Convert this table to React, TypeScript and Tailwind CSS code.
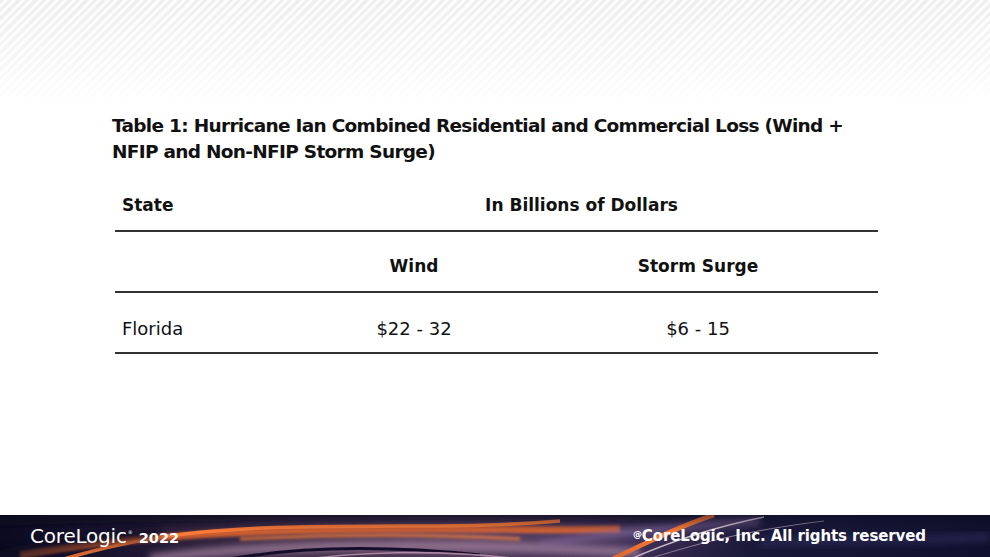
import React from "react";

function FooterArt() {
  return (
    <svg
      className="absolute inset-0 h-full w-full"
      viewBox="0 0 990 42"
      preserveAspectRatio="none"
    >
      <defs>
        <linearGradient id="base" x1="0" y1="0" x2="1" y2="0">
          <stop offset="0" stopColor="#0b0a20" />
          <stop offset="0.1" stopColor="#1a1430" />
          <stop offset="0.28" stopColor="#43304c" />
          <stop offset="0.48" stopColor="#5a4262" />
          <stop offset="0.62" stopColor="#4a3860" />
          <stop offset="0.76" stopColor="#1c1a3c" />
          <stop offset="1" stopColor="#10112f" />
        </linearGradient>
        <linearGradient id="vert" x1="0" y1="0" x2="0" y2="1">
          <stop offset="0" stopColor="#0b0a20" stopOpacity="0.5" />
          <stop offset="0.4" stopColor="#0b0a20" stopOpacity="0" />
          <stop offset="1" stopColor="#0b0a20" stopOpacity="0.15" />
        </linearGradient>
        <filter id="b1" x="-10%" y="-100%" width="120%" height="300%">
          <feGaussianBlur stdDeviation="1.8" />
        </filter>
        <filter id="b2" x="-10%" y="-100%" width="120%" height="300%">
          <feGaussianBlur stdDeviation="3.5" />
        </filter>
        <filter id="b0" x="-10%" y="-100%" width="120%" height="300%">
          <feGaussianBlur stdDeviation="0.7" />
        </filter>
      </defs>
      <rect width="990" height="42" fill="url(#base)" />
      <path d="M0 6 C 200 0, 420 -2, 700 2" stroke="#0a0a1e" strokeWidth="9" fill="none" filter="url(#b2)" opacity="0.7" />
      <path d="M150 44 C 260 30, 430 26, 640 38" stroke="#b08aa8" strokeWidth="9" fill="none" filter="url(#b2)" opacity="0.85" />
      <path d="M20 40 C 140 20, 260 14, 420 14 S 560 16, 620 14" stroke="#e0652f" strokeWidth="7" fill="none" filter="url(#b1)" opacity="0.9" />
      <path d="M50 48 C 110 30, 170 14, 300 12 S 470 13, 560 6" stroke="#ff7c38" strokeWidth="3.5" fill="none" filter="url(#b0)" />
      <path d="M240 24 C 320 20, 420 18, 520 24" stroke="#f88040" strokeWidth="3.5" fill="none" filter="url(#b1)" opacity="0.75" />
      <path d="M220 46 C 290 32, 380 30, 480 40" stroke="#150f2a" strokeWidth="3" fill="none" filter="url(#b0)" />
      <path d="M280 48 C 350 36, 440 34, 520 44" stroke="#d7a8c4" strokeWidth="1.6" fill="none" filter="url(#b0)" opacity="0.85" />
      <path d="M0 42 C 60 30, 100 22, 160 18" stroke="#0b0a20" strokeWidth="14" fill="none" filter="url(#b2)" opacity="0.6" />
      <path d="M540 30 C 600 20, 670 10, 760 6" stroke="#8a6ea0" strokeWidth="7" fill="none" filter="url(#b2)" opacity="0.7" />
      <path d="M608 46 C 640 32, 670 14, 714 0" stroke="#ff7a36" strokeWidth="4.5" fill="none" filter="url(#b0)" />
      <path d="M626 46 C 662 30, 704 14, 764 2" stroke="#f4e2ee" strokeWidth="1.6" fill="none" filter="url(#b0)" opacity="0.85" />
      <path d="M642 46 C 692 30, 742 16, 824 6" stroke="#dcc4da" strokeWidth="1" fill="none" filter="url(#b0)" opacity="0.6" />
      <path d="M760 28 C 850 24, 920 26, 990 22" stroke="#2e2e5c" strokeWidth="8" fill="none" filter="url(#b2)" opacity="0.7" />
      <rect width="990" height="42" fill="url(#vert)" />
    </svg>
  );
}

export default function App() {
  return (
    <div className="flex h-[557px] w-[990px] flex-col overflow-hidden bg-white font-['DejaVu_Sans',sans-serif] text-[#111]">
      <main className="flex-1 bg-white bg-[linear-gradient(to_bottom,rgba(255,255,255,0)_0%,rgba(255,255,255,0.5)_55%,#ffffff_100%),repeating-linear-gradient(135deg,#eeeeee_0px,#eeeeee_3px,#fcfcfc_3px,#fcfcfc_6px)] bg-[length:100%_105px] bg-no-repeat pl-[112px] pt-[113px]">
        <h1 className="whitespace-nowrap text-[18.5px] font-bold leading-[26px] tracking-[-0.7px]">
          Table 1: Hurricane Ian Combined Residential and Commercial Loss (Wind +
          <br />
          NFIP and Non-NFIP Storm Surge)
        </h1>
        <div className="ml-[3px] mt-[6px] w-[763px] text-[17px]">
          <div className="flex h-[61px] items-center border-b-2 border-[#333] pt-[11px] font-bold">
            <div className="w-[170px] pl-[7px]">State</div>
            <div className="flex-1 text-center">In Billions of Dollars</div>
          </div>
          <div className="grid h-[61px] grid-cols-[195px_208px_1fr] items-center border-b-2 border-[#333] pt-[10px] font-bold">
            <div />
            <div className="text-center">Wind</div>
            <div className="text-center">Storm Surge</div>
          </div>
          <div className="grid h-[61px] grid-cols-[195px_208px_1fr] items-center border-b-2 border-[#333] pt-[11px] text-[18px]">
            <div className="pl-[7px]">Florida</div>
            <div className="text-center">$22 - 32</div>
            <div className="text-center">$6 - 15</div>
          </div>
        </div>
      </main>
      <footer className="relative h-[42px] shrink-0 overflow-hidden">
        <FooterArt />
        <div className="relative flex h-full items-center justify-between pl-[30px] pr-[64px] text-white">
          <div className="flex items-baseline">
            <span className="text-[20px] leading-none tracking-[-0.2px]">CoreLogic</span>
            <span className="relative -top-[9px] ml-[1px] text-[5px] leading-none">®</span>
            <span className="ml-[6px] text-[14.5px] font-bold leading-none">2022</span>
          </div>
          <div className="text-[15px] font-bold leading-none tracking-[-0.1px]">
            <span className="relative -top-[4px] text-[9px]">@</span>CoreLogic, Inc. All rights reserved
          </div>
        </div>
      </footer>
    </div>
  );
}
